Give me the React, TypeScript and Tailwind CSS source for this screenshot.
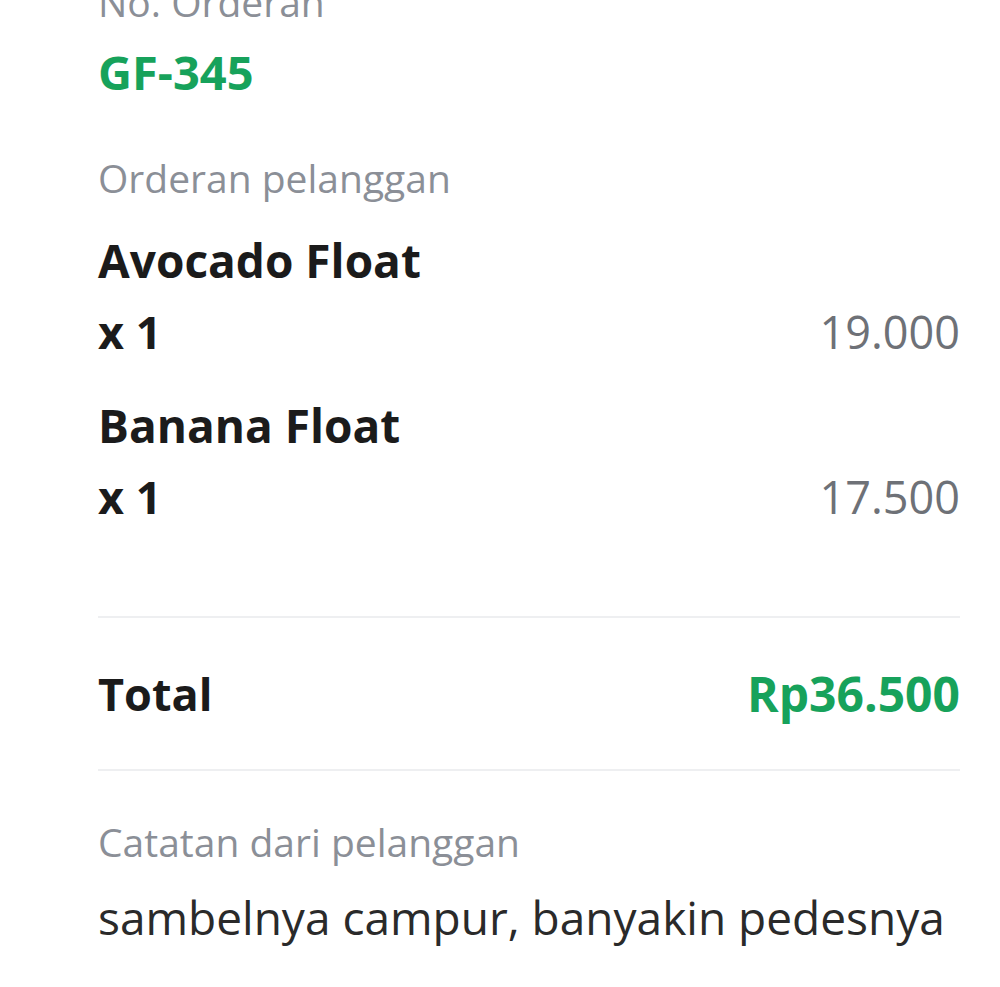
const items = [
  { name: "Avocado Float", qty: 1, price: "19.000" },
  { name: "Banana Float", qty: 1, price: "17.500" },
];

const App = () => {
  return (
    <div className="h-[987px] overflow-hidden bg-white font-['Open_Sans',sans-serif]">
      <div className="-mt-[24px] pl-[98px] pr-[40px]">
        <p className="text-[39px] leading-[52px] text-[#8b8f97]">No. Orderan</p>
        <p className="mt-[16px] text-[47px] font-bold leading-[56px] text-[#17a25b]">GF-345</p>

        <p className="mt-[52px] text-[39px] leading-[52px] text-[#8b8f97]">Orderan pelanggan</p>
        <div className="mt-[28px] flex flex-col gap-[37px]">
          {items.map((item) => (
            <div key={item.name}>
              <p className="text-[46px] font-bold leading-[56px] text-[#1b1b1b]">{item.name}</p>
              <div className="mt-[16px] flex items-center justify-between">
                <p className="text-[45px] font-bold leading-[56px] text-[#1b1b1b]">x {item.qty}</p>
                <p className="text-[45px] leading-[56px] text-[#6e7177]">{item.price}</p>
              </div>
            </div>
          ))}
        </div>

        <div className="mt-[91px] h-[2px] bg-[#eeeff1]" />
        <div className="flex h-[151px] items-center justify-between">
          <p className="text-[45px] font-bold leading-[56px] text-[#1b1b1b]">Total</p>
          <p className="text-[48px] font-bold leading-[56px] text-[#17a25b]">Rp36.500</p>
        </div>
        <div className="h-[2px] bg-[#eeeff1]" />

        <p className="mt-[45px] text-[39px] leading-[52px] text-[#8b8f97]">Catatan dari pelanggan</p>
        <p className="mt-[21px] text-[46px] leading-[56px] text-[#2a2a2a]">sambelnya campur, banyakin pedesnya</p>
      </div>
    </div>
  );
};

export default App;
